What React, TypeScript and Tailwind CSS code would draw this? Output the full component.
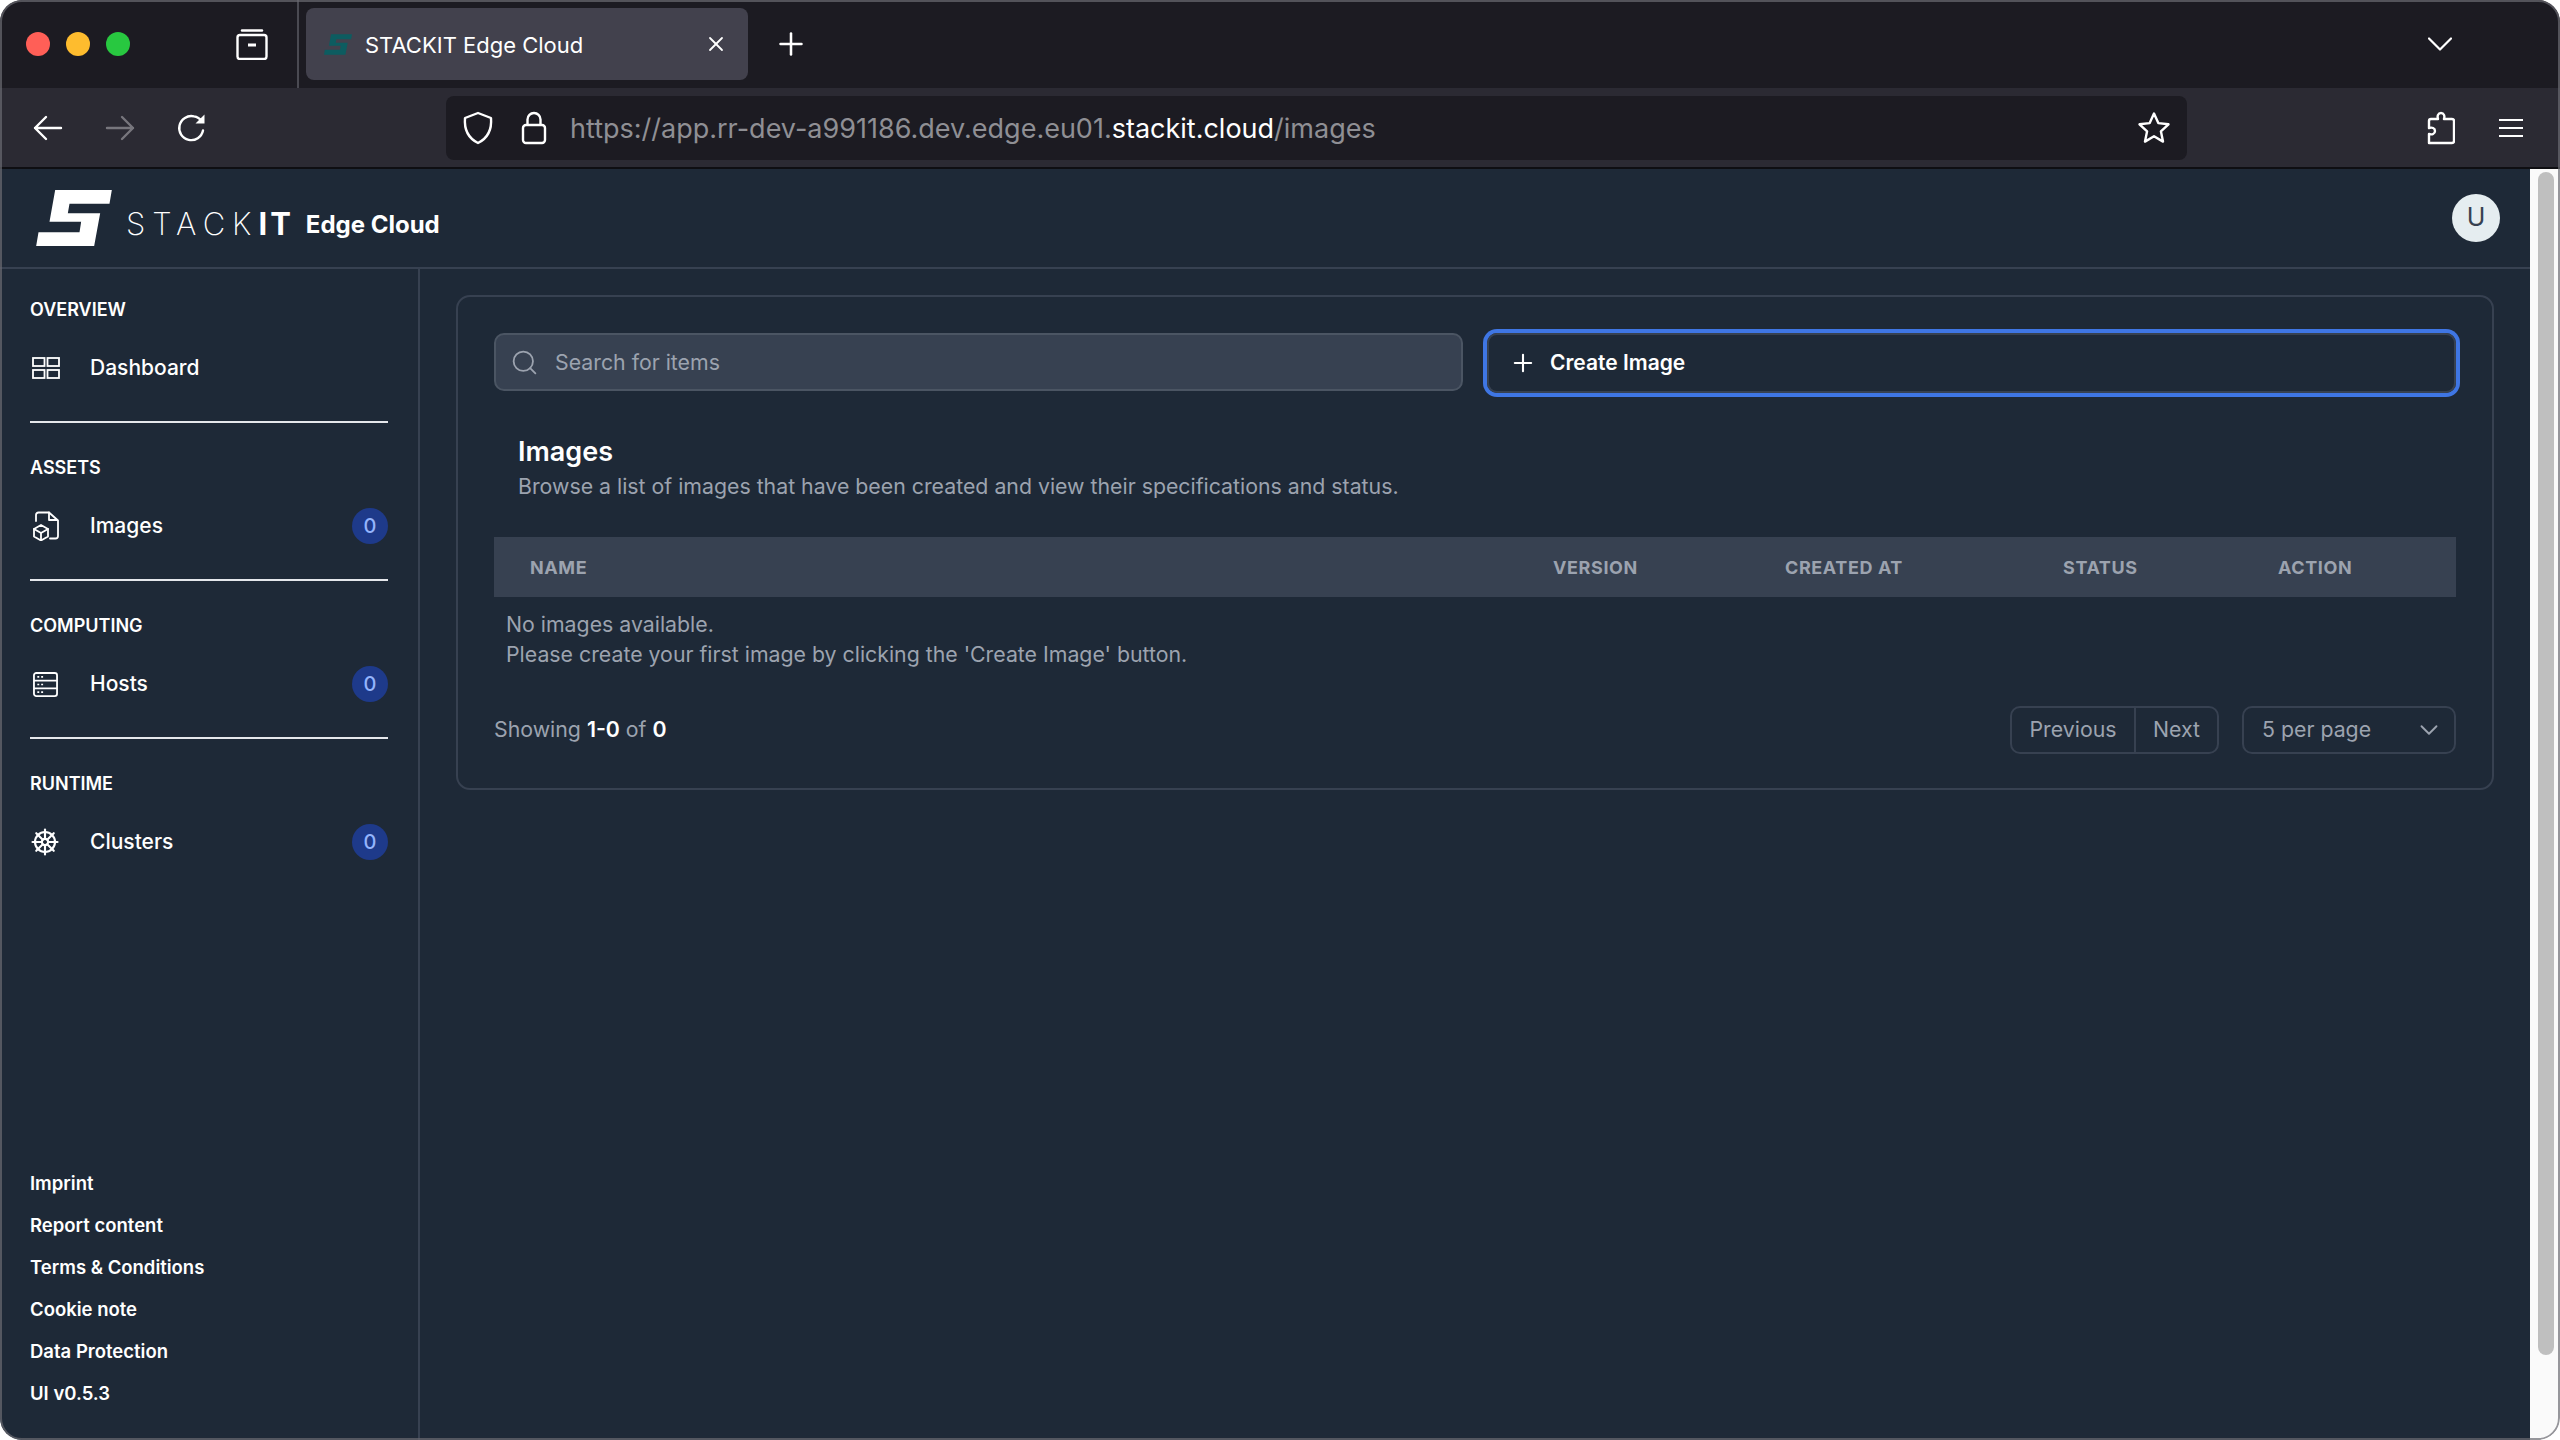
import { ChevronDown, Plus, Search, ShipWheel, X } from 'lucide-react';

function ArchiveIcon() {
  return (
    <svg width="32" height="32" viewBox="0 0 32 32" fill="none" stroke="white" strokeWidth="2.4" strokeLinecap="round" strokeLinejoin="round">
      <path d="M6 2.5h20" />
      <rect x="1.5" y="7" width="29" height="24" rx="2.5" />
      <path d="M12 17h8" strokeWidth="3" strokeLinecap="butt" />
    </svg>
  );
}

function StackitLogo({ className, color }: { className: string; color: string }) {
  return (
    <svg className={className} viewBox="48 45 227 168" fill={color}>
      <path d="M105 45 L275 45 L268 86 L148 86 L143 115 L240 115 L222 213 L48 213 L55 172 L178 172 L183 140 L88 140 Z" />
    </svg>
  );
}

function ArrowIcon({ flip, color }: { flip?: boolean; color: string }) {
  return (
    <svg className={flip ? 'rotate-180' : ''} width="30" height="26" viewBox="0 0 30 26" fill="none" stroke={color} strokeWidth="2.4" strokeLinecap="round" strokeLinejoin="round">
      <path d="M2 13h26M13 2 2 13l11 11" />
    </svg>
  );
}

function ReloadIcon() {
  return (
    <svg width="30" height="30" viewBox="0 0 30 30" fill="none" stroke="white" strokeWidth="2.4" strokeLinecap="round">
      <path d="M26 17.5A12 12 0 1 1 17 3.4c3.5.5 6 2.4 8 5" />
      <path d="M27.5 1.5v9h-9z" fill="white" stroke="none" />
    </svg>
  );
}

function ShieldIcon() {
  return (
    <svg width="32" height="34" viewBox="0 0 32 34" fill="none" stroke="white" strokeWidth="2.4" strokeLinejoin="round">
      <path d="M16 2 3 7c-1 12 3 20 13 25 10-5 14-13 13-25z" />
    </svg>
  );
}

function LockIcon() {
  return (
    <svg width="26" height="34" viewBox="0 0 26 34" fill="none" stroke="white" strokeWidth="2.4">
      <rect x="2" y="14" width="22" height="18" rx="3" />
      <path d="M6.5 14V8.5a6.5 6.5 0 0 1 13 0V14" />
    </svg>
  );
}

function StarIcon() {
  return (
    <svg width="34" height="34" viewBox="0 0 34 34" fill="none" stroke="white" strokeWidth="2.4" strokeLinejoin="round">
      <path d="M17 2.5l4.3 9.6 10.2 1.2-7.6 7 2.1 10.3-9-5.3-9 5.3 2.1-10.3-7.6-7 10.2-1.2z" />
    </svg>
  );
}

function PuzzleIcon() {
  return (
    <svg width="28" height="34" viewBox="0 0 28 34" fill="none" stroke="white" strokeWidth="2.4" strokeLinejoin="round">
      <path d="M2 32V23c3 1 6 0 6-3s-3-4-6-3v-7c0-1 1-2 2-2h7c-1-3 0-6 3-6s4 3 3 6h8c1 0 2 1 2 2v20c0 1-1 2-2 2z" />
    </svg>
  );
}

function MenuIcon() {
  return (
    <svg width="24" height="20" viewBox="0 0 24 20" stroke="white" strokeWidth="2.2">
      <path d="M0 2h24M0 10h24M0 18h24" />
    </svg>
  );
}

function DashboardIcon() {
  return (
    <svg width="28" height="22" viewBox="0 0 28 22" fill="none" stroke="white" strokeWidth="1.8">
      <rect x="1" y="1" width="11.5" height="8" />
      <rect x="15.5" y="1" width="11.5" height="8" />
      <rect x="1" y="13" width="11.5" height="8" />
      <rect x="15.5" y="13" width="11.5" height="8" />
    </svg>
  );
}

function ImagesIcon() {
  return (
    <svg width="28" height="30" viewBox="0 0 28 30" fill="none" stroke="white" strokeWidth="1.8" strokeLinecap="round" strokeLinejoin="round">
      <path d="M4 10V4c0-1.500 1-2.500 2.500-2.500H17l9 8V25c0 1.500-1 2.500-2.500 2.500H18" />
      <path d="M17 1.500V9h8" />
      <path d="M9 14l7 4v7.500l-7 4-7-4V18z" />
      <path d="M2 18l7 4 7-4M9 22v7.500" />
    </svg>
  );
}

function HostsIcon() {
  return (
    <svg className="ml-[1px]" width="25" height="25" viewBox="0 0 26 26" fill="none" stroke="white" strokeWidth="1.9">
      <rect x="1" y="1" width="24" height="24" rx="2.500" />
      <path d="M1 9h24M1 17h24" />
      <path d="M4.500 5h2M8.500 5h2M4.500 13h2M8.500 13h2M4.500 21h2M8.500 21h2" strokeWidth="1.800" />
    </svg>
  );
}

function NavItem({ icon, label, count }: { icon: React.ReactNode; label: string; count?: number }) {
  return (
    <div className="mt-[26px] flex h-[40px] items-center text-[21px] font-medium text-white">
      <span className="flex w-[60px] justify-start pl-[2px]">{icon}</span>
      <span>{label}</span>
      {count !== undefined && (
        <span className="ml-auto flex h-[36px] w-[36px] items-center justify-center rounded-full bg-[#1e3a8a] text-[20px] font-medium text-[#93b4fd]">
          {count}
        </span>
      )}
    </div>
  );
}

function NavSection({ title, last, children }: { title: string; last?: boolean; children: React.ReactNode }) {
  return (
    <div>
      <div className="h-[24px] text-[18px] leading-[24px] font-semibold text-white uppercase">{title}</div>
      {children}
      {!last && <div className="mt-[33px] mb-[33px] h-[2px] bg-[#e5e7eb]" />}
    </div>
  );
}

const footerLinks = ['Imprint', 'Report content', 'Terms & Conditions', 'Cookie note', 'Data Protection', 'UI v0.5.3'];

export default function App() {
  return (
    <div className="h-[1440px] w-[2560px] overflow-hidden bg-white font-[Inter,sans-serif]">
      <div className="relative flex h-full w-full flex-col overflow-hidden rounded-[22px]">
        {/* tab strip */}
        <div className="flex h-[88px] shrink-0 items-center bg-[#1c1b22]">
          <div className="flex w-[236px] items-center gap-[16px] pl-[26px]">
            <span className="h-[24px] w-[24px] rounded-full bg-[#ff5f57]" />
            <span className="h-[24px] w-[24px] rounded-full bg-[#febc2e]" />
            <span className="h-[24px] w-[24px] rounded-full bg-[#28c840]" />
          </div>
          <ArchiveIcon />
          <div className="ml-[29px] h-full w-[2px] bg-[#4a4a52]" />
          <div className="ml-[7px] flex h-[72px] w-[442px] items-center rounded-[8px] bg-[#42414d] pr-[20px] pl-[18px]">
            <StackitLogo className="h-[23px] w-[28px]" color="#0d5c60" />
            <span className="mt-[3px] ml-[13px] text-[22px] text-white">STACKIT Edge Cloud</span>
            <X className="ml-auto" size={24} color="white" strokeWidth={1.8} />
          </div>
          <Plus className="ml-[25px]" size={36} color="white" strokeWidth={1.7} />
          <svg className="mr-[108px] ml-auto" width="24" height="14" viewBox="0 0 24 14" fill="none" stroke="white" strokeWidth="2.2" strokeLinecap="round" strokeLinejoin="round">
            <path d="M1 1.500l11 11 11-11" />
          </svg>
        </div>

        {/* toolbar */}
        <div className="flex h-[81px] shrink-0 items-center border-b-2 border-[#0e0e12] bg-[#2b2a33]">
          <div className="flex items-center gap-[42px] pl-[33px]">
            <ArrowIcon color="white" />
            <ArrowIcon flip color="#77767d" />
            <ReloadIcon />
          </div>
          <div className="ml-[239px] flex h-[64px] w-[1741px] items-center rounded-[8px] bg-[#1c1b22] pr-[16px] pl-[16px]">
            <ShieldIcon />
            <span className="ml-[27px]"><LockIcon /></span>
            <span className="mt-[4px] ml-[23px] text-[27px] text-[#8f8f94]">
              https://app.rr-dev-a991186.dev.edge.eu01.<span className="text-white">stackit.cloud</span>/images
            </span>
            <span className="ml-auto"><StarIcon /></span>
          </div>
          <span className="ml-[240px]"><PuzzleIcon /></span>
          <span className="ml-[44px]"><MenuIcon /></span>
        </div>

        <div className="flex min-h-0 flex-1">
          <div className="flex min-w-0 flex-1 flex-col bg-[#1e2937]">
            {/* app header */}
            <div className="flex h-[100px] shrink-0 items-center border-b-2 border-[#374151] pr-[30px] pl-[36px]">
              <StackitLogo className="h-[56px] w-[76px]" color="white" />
              <span className="mt-[13px] ml-[14px] text-[31px] font-extralight text-white">
                <span className="tracking-[7px]">STACK</span>
                <span className="font-bold tracking-[3px]">IT</span>
              </span>
              <span className="mt-[13px] ml-[12px] text-[24px] font-bold text-white">Edge Cloud</span>
              <span className="mt-[-1px] ml-auto flex h-[48px] w-[48px] items-center justify-center rounded-full bg-[#e5edf0] text-[25px] text-[#374151]">
                U
              </span>
            </div>

            <div className="flex min-h-0 flex-1">
              {/* sidebar */}
              <div className="flex w-[420px] shrink-0 flex-col border-r-2 border-[#374151] pt-[29px] pr-[30px] pl-[30px]">
                <NavSection title="Overview">
                  <NavItem icon={<DashboardIcon />} label="Dashboard" />
                </NavSection>
                <NavSection title="Assets">
                  <NavItem icon={<ImagesIcon />} label="Images" count={0} />
                </NavSection>
                <NavSection title="Computing">
                  <NavItem icon={<HostsIcon />} label="Hosts" count={0} />
                </NavSection>
                <NavSection title="Runtime" last>
                  <NavItem icon={<ShipWheel className="ml-[-2px]" size={30} color="white" strokeWidth={1.7} />} label="Clusters" count={0} />
                </NavSection>
                <div className="mt-auto pb-[25px]">
                  {footerLinks.map((link) => (
                    <div key={link} className="flex h-[42px] items-center text-[18.500px] font-semibold text-white">
                      {link}
                    </div>
                  ))}
                </div>
              </div>

              {/* content */}
              <div className="min-w-0 flex-1 pt-[26px] pr-[36px] pl-[36px]">
                <div className="rounded-[14px] border-2 border-[#374151] px-[36px] pt-[36px] pb-[34px]">
                  <div className="flex gap-[24px]">
                    <div className="flex h-[58px] w-[969px] items-center rounded-[10px] border-2 border-[#4b5563] bg-[#374151] pl-[14px] text-[21.300px] text-[#9ca3af]">
                      <Search size={29} color="#9ca3af" strokeWidth={1.5} />
                      <span className="mt-[2px] ml-[16px]">Search for items</span>
                    </div>
                    <div className="flex h-[60px] flex-1 items-center rounded-[10px] border-2 border-[#374151] pl-[20px] text-[21px] font-semibold text-white ring-[4px] ring-[#3f76e4]">
                      <Plus size={28} color="white" strokeWidth={1.8} />
                      <span className="ml-[13px]">Create Image</span>
                    </div>
                  </div>

                  <div className="mt-[41px] pl-[24px]">
                    <div className="text-[27px] leading-[36px] font-semibold text-white">Images</div>
                    <div className="mt-[1px] text-[21.300px] leading-[30px] text-[#9ca3af]">
                      Browse a list of images that have been created and view their specifications and status.
                    </div>
                  </div>

                  <div className="mt-[36px] grid h-[60px] grid-cols-[1023px_232px_278px_215px_1fr] items-center bg-[#374151] text-[18px] font-bold tracking-[0.6px] text-[#9ca3af] uppercase">
                    <div className="pl-[36px]">Name</div>
                    <div className="pl-[36px]">Version</div>
                    <div className="pl-[36px]">Created at</div>
                    <div className="pl-[36px]">Status</div>
                    <div className="pl-[36px]">Action</div>
                  </div>

                  <div className="mt-[12px] pl-[12px] text-[21.300px] leading-[30px] text-[#9ca3af]">
                    <div>No images available.</div>
                    <div>Please create your first image by clicking the 'Create Image' button.</div>
                  </div>

                  <div className="mt-[37px] flex h-[48px] items-center text-[21.300px] text-[#9ca3af]">
                    <div>
                      Showing <span className="font-semibold text-white">1-0</span> of{' '}
                      <span className="font-semibold text-white">0</span>
                    </div>
                    <div className="ml-auto flex h-full rounded-[10px] border-2 border-[#374151]">
                      <div className="flex w-[124px] items-center justify-center border-r-2 border-[#374151]">Previous</div>
                      <div className="flex w-[81px] items-center justify-center">Next</div>
                    </div>
                    <div className="ml-[23px] flex h-full w-[214px] items-center rounded-[10px] border-2 border-[#374151] pr-[10px] pl-[18px]">
                      <span>5 per page</span>
                      <ChevronDown className="ml-auto" size={30} color="#9ca3af" strokeWidth={1.5} />
                    </div>
                  </div>
                </div>
              </div>
            </div>
          </div>

          {/* page scrollbar */}
          <div className="w-[30px] shrink-0 bg-[#fafafa] pt-[3px] pr-[6px] pl-[8px]">
            <div className="h-[1183px] rounded-full bg-[#bfbfbf]" />
          </div>
        </div>

        <div className="pointer-events-none absolute inset-0 rounded-[22px] border-2 border-[#6b6b72]/70" />
      </div>
    </div>
  );
}
